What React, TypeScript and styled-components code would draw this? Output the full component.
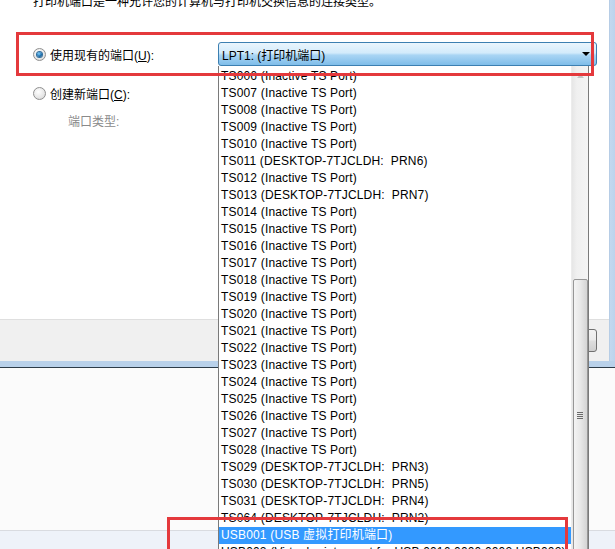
import styled, { createGlobalStyle } from "styled-components";

const GlobalStyle = createGlobalStyle`
  html, body {
    margin: 0;
    padding: 0;
  }
  body {
    width: 615px;
    height: 549px;
    overflow: hidden;
    background: #fbfbfb;
    font-family: "Liberation Sans", "Noto Sans CJK SC", sans-serif;
    font-size: 12px;
    color: #000;
  }
`;

const prn = (n: number) => `DESKTOP-7TJCLDH:  PRN${n}`;

const ports: { name: string; desc: string }[] = [];
for (let i = 6; i <= 31; i++) {
  const name = "TS0" + String(i).padStart(2, "0");
  let desc = "Inactive TS Port";
  if (i === 11) desc = prn(6);
  if (i === 13) desc = prn(7);
  if (i === 29) desc = prn(3);
  if (i === 30) desc = prn(5);
  if (i === 31) desc = prn(4);
  ports.push({ name, desc });
}
ports.push({ name: "TS064", desc: prn(2) });
ports.push({ name: "USB001", desc: "USB 虚拟打印机端口" });
ports.push({ name: "USB002", desc: "Virtual printer port for USB 0016 0000 0002 USB002" });

const SELECTED = "USB001";

export default function App() {
  return (
    <>
      <GlobalStyle />
      <Screen>
        <Window>
          <WindowRow>
            <Main>
              <Content>
                <Intro>打印机端口是一种允许您的计算机与打印机交换信息的连接类型。</Intro>
                <OptionRow>
                  <RadioLabel>
                    <Radio checked />
                    <span>
                      使用现有的端口(<u>U</u>):
                    </span>
                  </RadioLabel>
                  <Combo>
                    <span>LPT1: (打印机端口)</span>
                    <Arrow />
                  </Combo>
                </OptionRow>
                <SecondRow>
                  <RadioLabel>
                    <Radio />
                    <span>
                      创建新端口(<u>C</u>):
                    </span>
                  </RadioLabel>
                </SecondRow>
                <TypeRow>端口类型:</TypeRow>
              </Content>
              <ButtonBar>
                <Button>下一步(N)</Button>
              </ButtonBar>
            </Main>
            <FrameSide />
          </WindowRow>
          <FrameBottom />
        </Window>
        <Desktop>
          <DesktopStrip />
        </Desktop>

        <DropList>
          <Items>
            {ports.map((p) => (
              <Item key={p.name} selected={p.name === SELECTED}>
                {p.name} ({p.desc})
              </Item>
            ))}
          </Items>
          <ScrollBar>
            <ScrollButton>
              <svg width="7" height="4" viewBox="0 0 7 4">
                <path d="M0 4 L3.5 0 L7 4 Z" fill="#c4c4c4" />
              </svg>
            </ScrollButton>
            <Thumb>
              <Grip>
                <span />
                <span />
                <span />
                <span />
              </Grip>
            </Thumb>
          </ScrollBar>
        </DropList>

        <Mark left={16} top={32} width={578} height={44} />
        <Mark left={167} top={517} width={401} height={60} />
      </Screen>
    </>
  );
}

// STYLED COMPONENTS
const Screen = styled.div`
  position: relative;
  width: 615px;
  height: 549px;
  overflow: hidden;
  display: flex;
  flex-direction: column;
`;

const Window = styled.div`
  height: 368px;
  display: flex;
  flex-direction: column;
`;

const WindowRow = styled.div`
  display: flex;
  height: 361px;
`;

const Main = styled.div`
  flex: 1;
  display: flex;
  flex-direction: column;
`;

const Content = styled.div`
  height: 319px;
  background: #fff;
  border-bottom: 1px solid #dfdfdf;
  padding-left: 33px;
  display: flex;
  flex-direction: column;
`;

const Intro = styled.div`
  margin-top: -6px;
  height: 17px;
  line-height: 17px;
  white-space: nowrap;
`;

const OptionRow = styled.div`
  margin-top: 31px;
  height: 24px;
  display: flex;
  align-items: center;
`;

const SecondRow = styled.div`
  margin-top: 18px;
  height: 18px;
  display: flex;
  align-items: center;
`;

const TypeRow = styled.div`
  margin-top: 11px;
  height: 18px;
  line-height: 18px;
  padding-left: 35px;
  color: #8a8a8a;
`;

const RadioLabel = styled.label`
  width: 185px;
  display: flex;
  align-items: center;
  gap: 4px;
  white-space: nowrap;

  u {
    text-decoration: underline;
  }
`;

const Radio = styled.span<{ checked?: boolean }>`
  width: 11px;
  height: 11px;
  border-radius: 50%;
  border: 1px solid #8f8f8f;
  background: radial-gradient(circle at 40% 35%, #ffffff 0%, #e6e6e6 60%, #cfcfcf 100%);
  display: flex;
  align-items: center;
  justify-content: center;
  flex-shrink: 0;

  &::after {
    content: "";
    display: ${(p) => (p.checked ? "block" : "none")};
    width: 5px;
    height: 5px;
    border-radius: 50%;
    background: radial-gradient(circle at 40% 35%, #7fd0ff 0%, #1d6fae 55%, #0d3e66 100%);
    box-shadow: 0 0 0 1px #2f6d9c;
  }
`;

const Combo = styled.div`
  width: 368px;
  height: 22px;
  border: 1px solid #3c7fb1;
  border-radius: 3px;
  background: linear-gradient(#eaf5fd 0%, #d3ebfb 45%, #a9d5f4 55%, #7fbde9 100%);
  display: flex;
  align-items: center;
  justify-content: space-between;
  padding: 0 6px 0 3px;
  box-sizing: content-box;
  margin-right: -3px;
  white-space: nowrap;
`;

const Arrow = styled.span`
  width: 0;
  height: 0;
  border-left: 4px solid transparent;
  border-right: 4px solid transparent;
  border-top: 4px solid #000;
`;

const ButtonBar = styled.div`
  flex: 1;
  background: #f0f0f0;
  display: flex;
  justify-content: flex-end;
  align-items: flex-start;
  padding: 9px 12px 0 0;
`;

const Button = styled.div`
  width: 73px;
  height: 21px;
  border: 1px solid #707070;
  border-radius: 3px;
  background: linear-gradient(#f2f2f2 0%, #ebebeb 45%, #dddddd 55%, #cfcfcf 100%);
  display: flex;
  align-items: center;
  justify-content: center;
`;

const FrameSide = styled.div`
  width: 6px;
  background: linear-gradient(90deg, #a9c2dd 0px, #c3d8ef 1px, #bcd3ec 100%);
`;

const FrameBottom = styled.div`
  height: 6px;
  background: #b9d1ea;
  border-bottom: 1px solid #2d3b48;
`;

const Desktop = styled.div`
  flex: 1;
  background: #fbfbfb;
  display: flex;
  flex-direction: column;
  justify-content: flex-end;
`;

const DesktopStrip = styled.div`
  height: 18px;
  border-top: 1px solid #d9dbe0;
  background: #eef2f9;
`;

const DropList = styled.div`
  position: absolute;
  left: 218px;
  top: 66px;
  width: 369px;
  height: 520px;
  background: #fff;
  border: 1px solid #7a7a7a;
  border-top: none;
  padding-top: 2px;
  display: flex;
`;

const Items = styled.div`
  flex: 1;
  display: flex;
  flex-direction: column;
`;

const Item = styled.div<{ selected?: boolean }>`
  height: 17px;
  line-height: 17px;
  padding-left: 2px;
  white-space: pre;
  overflow: hidden;
  letter-spacing: 0.17px;
  background: ${(p) => (p.selected ? "#3399ff" : "transparent")};
  color: ${(p) => (p.selected ? "#fff" : "#000")};
`;

const ScrollBar = styled.div`
  width: 17px;
  margin-top: -2px;
  background: linear-gradient(90deg, #e6e6e6 0%, #f0f0f0 30%, #f4f4f4 100%);
  border-left: 1px solid #ececec;
  box-sizing: border-box;
  display: flex;
  flex-direction: column;
  align-items: center;
`;

const ScrollButton = styled.div`
  height: 17px;
  display: flex;
  align-items: center;
  justify-content: center;
  padding-top: 4px;
`;

const Thumb = styled.div`
  margin-top: 198px;
  width: 15px;
  height: 400px;
  border: 1px solid #979797;
  border-radius: 2px;
  box-sizing: border-box;
  background: linear-gradient(90deg, #f4f4f4 0%, #e8e8e8 50%, #d4d4d4 100%);
  display: flex;
  justify-content: center;
  padding-top: 132px;
`;

const Grip = styled.div`
  display: flex;
  flex-direction: column;
  gap: 1px;

  span {
    width: 6px;
    height: 1px;
    background: #6b6b6b;
  }
`;

const Mark = styled.div<{ left: number; top: number; width: number; height: number }>`
  position: absolute;
  left: ${(p) => p.left}px;
  top: ${(p) => p.top}px;
  width: ${(p) => p.width}px;
  height: ${(p) => p.height}px;
  box-sizing: border-box;
  border: 3px solid #e4393c;
  pointer-events: none;
`;
